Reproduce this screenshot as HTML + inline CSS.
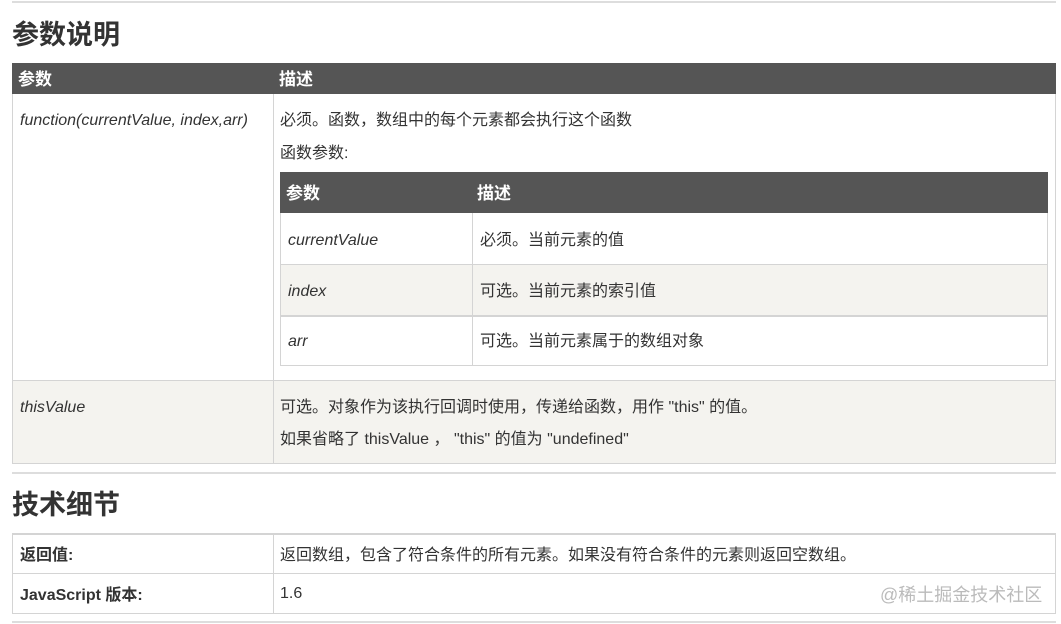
<!DOCTYPE html>
<html><head><meta charset="utf-8"><style>
*{margin:0;padding:0;box-sizing:border-box}
body{width:1061px;height:624px;background:#fff;position:relative;overflow:hidden;font-family:"Liberation Sans","Noto Sans CJK SC",sans-serif;color:#333;font-size:16px}
.a{position:absolute;line-height:20px}
.hr{position:absolute;left:12px;width:1044px;height:2px;background:#ddd}
h2{position:absolute;left:12px;font-size:27px;font-weight:bold;color:#333;line-height:30px}
.hd{background:#555;color:#fff;font-weight:bold;font-size:16px}
.b{border:1px solid #d4d4d4}
i{font-style:italic}
</style></head><body>
<div class="hr" style="top:1px"></div>
<h2 style="top:20px">参数说明</h2>
<div class="a hd" style="left:12px;top:63px;width:1044px;height:31px"></div>
<div class="a" style="left:18px;top:64px;line-height:31px;color:#fff;font-weight:bold;font-size:17px">参数</div>
<div class="a" style="left:279px;top:64px;line-height:31px;color:#fff;font-weight:bold;font-size:17px">描述</div>
<div class="a b" style="left:12px;top:94px;width:1044px;height:287px;border-top:none"></div>
<div class="a b" style="left:12px;top:380px;width:1044px;height:84px;background:#f4f3ef"></div>
<div class="a" style="left:273px;top:94px;width:1px;height:370px;background:#d4d4d4"></div>
<div class="a" style="left:20px;top:111px"><i>function(currentValue, index,arr)</i></div>
<div class="a" style="left:280px;top:111px">必须。函数，数组中的每个元素都会执行这个函数</div>
<div class="a" style="left:280px;top:144px">函数参数:</div>
<div class="a hd" style="left:280px;top:172px;width:768px;height:41px"></div>
<div class="a" style="left:286px;top:173px;line-height:41px;color:#fff;font-weight:bold;font-size:17px">参数</div>
<div class="a" style="left:477px;top:173px;line-height:41px;color:#fff;font-weight:bold;font-size:17px">描述</div>
<div class="a b" style="left:280px;top:213px;width:768px;height:52px;border-top:none"></div>
<div class="a b" style="left:280px;top:264px;width:768px;height:52px;background:#f4f3ef"></div>
<div class="a b" style="left:280px;top:315px;width:768px;height:51px;border-top:2px solid #d4d4d4"></div>
<div class="a" style="left:472px;top:213px;width:1px;height:153px;background:#d4d4d4"></div>
<div class="a" style="left:288px;top:231px"><i>currentValue</i></div>
<div class="a" style="left:480px;top:231px">必须。当前元素的值</div>
<div class="a" style="left:288px;top:282px"><i>index</i></div>
<div class="a" style="left:480px;top:282px">可选。当前元素的索引值</div>
<div class="a" style="left:288px;top:332px"><i>arr</i></div>
<div class="a" style="left:480px;top:332px">可选。当前元素属于的数组对象</div>
<div class="a" style="left:20px;top:398px"><i>thisValue</i></div>
<div class="a" style="left:280px;top:398px">可选。对象作为该执行回调时使用，传递给函数，用作 "this" 的值。</div>
<div class="a" style="left:280px;top:430px">如果省略了 thisValue ， "this" 的值为 "undefined"</div>
<div class="hr" style="top:472px"></div>
<h2 style="top:490px">技术细节</h2>
<div class="a b" style="left:12px;top:533px;width:1044px;height:41px;border-top:2px solid #d4d4d4"></div>
<div class="a b" style="left:12px;top:573px;width:1044px;height:41px"></div>
<div class="a" style="left:273px;top:533px;width:1px;height:81px;background:#d4d4d4"></div>
<div class="a" style="left:20px;top:546px;font-weight:bold">返回值:</div>
<div class="a" style="left:280px;top:546px">返回数组，包含了符合条件的所有元素。如果没有符合条件的元素则返回空数组。</div>
<div class="a" style="left:20px;top:586px;font-weight:bold">JavaScript 版本:</div>
<div class="a" style="left:280px;top:584px">1.6</div>
<div class="a" style="left:880px;top:585px;font-size:18px;color:#bbb">@稀土掘金技术社区</div>
<div class="hr" style="top:621px"></div>
</body></html>
